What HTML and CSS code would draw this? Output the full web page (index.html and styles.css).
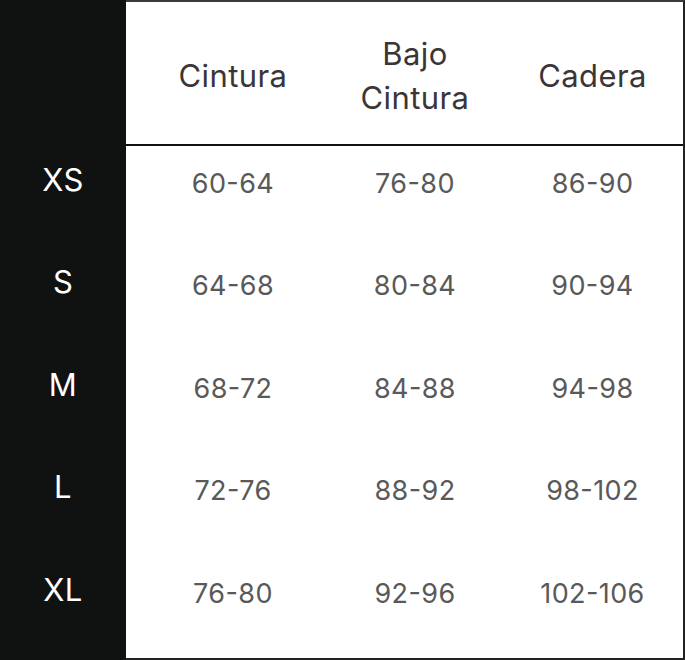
FILE: index.html
```html
<!DOCTYPE html>
<html lang="es">
<head>
<meta charset="utf-8">
<title>Tabla de tallas</title>
<link rel="stylesheet" href="styles.css">
</head>
<body>
<div class="chart">
  <div class="sizes">
    <div class="sizes-head"></div>
    <div class="size">XS</div>
    <div class="size">S</div>
    <div class="size">M</div>
    <div class="size">L</div>
    <div class="size">XL</div>
  </div>
  <div class="table">
    <div class="row head">
      <div class="cell c1">Cintura</div>
      <div class="cell c2">Bajo Cintura</div>
      <div class="cell c3">Cadera</div>
    </div>
    <div class="row data">
      <div class="cell c1">60-64</div>
      <div class="cell c2">76-80</div>
      <div class="cell c3">86-90</div>
    </div>
    <div class="row data">
      <div class="cell c1">64-68</div>
      <div class="cell c2">80-84</div>
      <div class="cell c3">90-94</div>
    </div>
    <div class="row data">
      <div class="cell c1">68-72</div>
      <div class="cell c2">84-88</div>
      <div class="cell c3">94-98</div>
    </div>
    <div class="row data">
      <div class="cell c1">72-76</div>
      <div class="cell c2">88-92</div>
      <div class="cell c3">98-102</div>
    </div>
    <div class="row data">
      <div class="cell c1">76-80</div>
      <div class="cell c2">92-96</div>
      <div class="cell c3">102-106</div>
    </div>
  </div>
</div>
</body>
</html>
```
FILE: styles.css
```css
* { box-sizing: border-box; }

html, body {
  margin: 0;
  padding: 0;
  background: #ffffff;
}

body {
  font-family: "Inter", "Liberation Sans", sans-serif;
}

.chart {
  display: flex;
  width: 685px;
  height: 660px;
}

.sizes {
  width: 126px;
  flex: none;
  background: #101211;
  display: flex;
  flex-direction: column;
  padding-bottom: 2px;
}

.sizes-head {
  height: 146px;
  flex: none;
}

.size {
  flex: 1 1 0;
  color: #ffffff;
  font-size: 31px;
  line-height: 40px;
  padding-top: 14px;
  text-align: center;
  letter-spacing: 0.3px;
}

.table {
  flex: 1;
  display: flex;
  flex-direction: column;
  border-top: 2px solid #3a3a3a;
  border-right: 2px solid #222222;
  border-bottom: 2px solid #222222;
}

.row {
  display: grid;
  grid-template-columns: 202px 174px 1fr;
}

.row.head {
  height: 144px;
  flex: none;
  border-bottom: 2px solid #111111;
  align-items: center;
}

.row.data {
  flex: 1 1 0;
  align-items: start;
}

.cell {
  text-align: center;
}

.cell.c1 {
  padding-left: 12px;
}

.head .cell {
  color: #3a3637;
  font-size: 31px;
  line-height: 44px;
  padding-right: 18px;
  padding-left: 18px;
  letter-spacing: 0.4px;
  padding-top: 6px;
}

.head .cell.c1 {
  padding-left: 30px;
}

.data .cell {
  color: #595959;
  font-size: 27px;
  line-height: 40px;
  padding-top: 18px;
  letter-spacing: 0.4px;
  font-feature-settings: "case" 1;
}
```
